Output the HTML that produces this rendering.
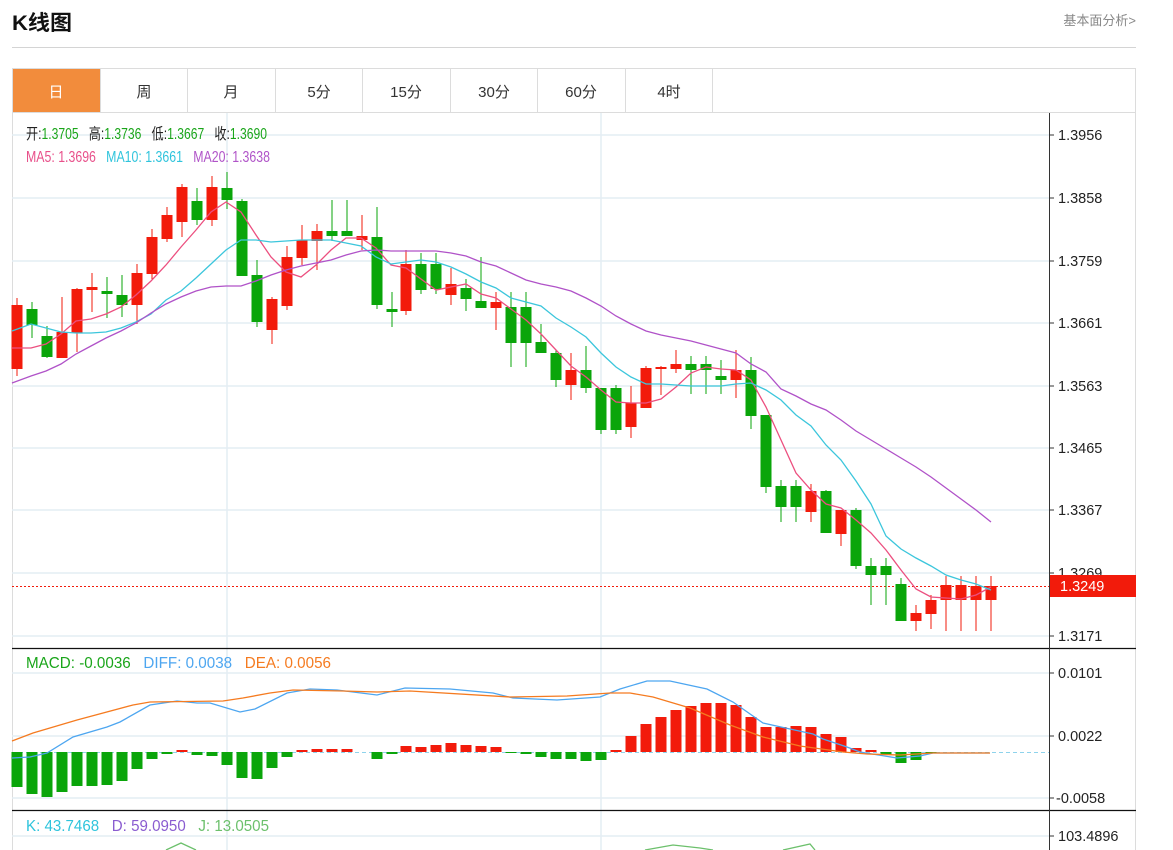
<!DOCTYPE html>
<html><head><meta charset="utf-8"><style>
body{margin:0;width:1173px;height:850px;overflow:hidden;background:#fff;font-family:"Liberation Sans","Noto Sans CJK SC",sans-serif;}
</style></head><body>
<svg width="1173" height="850" xmlns="http://www.w3.org/2000/svg" style="position:absolute;left:0;top:0" font-family="Liberation Sans, Noto Sans CJK SC, sans-serif">
<text x="12" y="30" font-size="21" font-weight="bold" fill="#111" textLength="60" lengthAdjust="spacingAndGlyphs">K线图</text>
<text x="1136" y="25" font-size="13" fill="#888" text-anchor="end">基本面分析&gt;</text>
<rect x="12" y="47" width="1124" height="1" fill="#d4d4d4"/>
<rect x="12.5" y="68.5" width="1123" height="44" fill="#fff" stroke="#dcdcdc"/>
<rect x="13" y="69" width="87" height="43" fill="#f28c3c"/>
<g stroke="#dcdcdc"><path d="M100.5 69v43M187.5 69v43M275.5 69v43M362.5 69v43M450.5 69v43M537.5 69v43M625.5 69v43M712.5 69v43"/></g>
<g font-size="15" fill="#333" text-anchor="middle">
<text x="56" y="97" fill="#fff">日</text><text x="144" y="97">周</text><text x="231" y="97">月</text><text x="319" y="97">5分</text><text x="406" y="97">15分</text><text x="494" y="97">30分</text><text x="581" y="97">60分</text><text x="669" y="97">4时</text>
</g>
<path d="M12.5 112v738M1135.5 112v738" stroke="#dcdcdc"/>
<g stroke="#e4edf4" stroke-width="1.5">
<path d="M12 135H1049M12 198H1049M12 261H1049M12 323H1049M12 386H1049M12 448H1049M12 510H1049M12 573H1049M12 636H1049M12 673H1049M12 736H1049M12 798H1049M12 836H1049M227 113V850M601 113V850"/>
</g>
<path d="M12 648.5H1136M12 810.5H1136" stroke="#111" stroke-width="1.3"/>
<path d="M1049.5 113V850" stroke="#333"/>
<g stroke="#333"><path d="M1049 135h5M1049 198h5M1049 261h5M1049 323h5M1049 386h5M1049 448h5M1049 510h5M1049 573h5M1049 636h5M1049 673h5M1049 736h5M1049 798h5M1049 836h5"/></g>
<g font-size="14.5" fill="#222">
<text x="1058" y="140">1.3956</text><text x="1058" y="203">1.3858</text><text x="1058" y="266">1.3759</text><text x="1058" y="328">1.3661</text><text x="1058" y="391">1.3563</text><text x="1058" y="453">1.3465</text><text x="1058" y="515">1.3367</text><text x="1058" y="578">1.3269</text><text x="1058" y="641">1.3171</text>
<text x="1058" y="678">0.0101</text><text x="1058" y="741">0.0022</text><text x="1056" y="803">-0.0058</text><text x="1058" y="841">103.4896</text>
</g>
<rect x="1050" y="575" width="86" height="22" fill="#f21b0b"/>
<text x="1060" y="591" font-size="14.5" fill="#fff">1.3249</text>
<path d="M12 586.5H1049" stroke="#f21b0b" stroke-dasharray="2,2"/>
<g font-size="15.5">
<text x="26" y="139" fill="#222" xml:space="preserve" textLength="241" lengthAdjust="spacingAndGlyphs">开:<tspan fill="#1aa51a">1.3705</tspan>   高:<tspan fill="#1aa51a">1.3736</tspan>   低:<tspan fill="#1aa51a">1.3667</tspan>   收:<tspan fill="#1aa51a">1.3690</tspan></text>
<text x="26" y="162" fill="#e8508a" xml:space="preserve" textLength="244" lengthAdjust="spacingAndGlyphs">MA5: 1.3696   <tspan fill="#2fc4dc">MA10: 1.3661</tspan>   <tspan fill="#b054c8">MA20: 1.3638</tspan></text>
<text x="26" y="668" fill="#1aa51a" xml:space="preserve" textLength="305" lengthAdjust="spacingAndGlyphs">MACD: -0.0036   <tspan fill="#4da6f0">DIFF: 0.0038</tspan>   <tspan fill="#f57b20">DEA: 0.0056</tspan></text>
<text x="26" y="831" fill="#2fc4dc" xml:space="preserve" textLength="243" lengthAdjust="spacingAndGlyphs">K: 43.7468   <tspan fill="#8a5cd0">D: 59.0950</tspan>   <tspan fill="#6cc06c">J: 13.0505</tspan></text>
</g>
<g fill="#f21b0b">
<rect x="16.5" y="298" width="1" height="78"/><rect x="11.5" y="305" width="11" height="64"/>
<rect x="61.5" y="297" width="1" height="61"/><rect x="56.5" y="332" width="11" height="26"/>
<rect x="76.5" y="288" width="1" height="64"/><rect x="71.5" y="289" width="11" height="44"/>
<rect x="91.5" y="273" width="1" height="39"/><rect x="86.5" y="287" width="11" height="3"/>
<rect x="136.5" y="264" width="1" height="60"/><rect x="131.5" y="273" width="11" height="32"/>
<rect x="151.5" y="229" width="1" height="50"/><rect x="146.5" y="237" width="11" height="37"/>
<rect x="166.5" y="207" width="1" height="35"/><rect x="161.5" y="215" width="11" height="24"/>
<rect x="181.5" y="184" width="1" height="53"/><rect x="176.5" y="187" width="11" height="35"/>
<rect x="211.5" y="176" width="1" height="50"/><rect x="206.5" y="187" width="11" height="33"/>
<rect x="271.5" y="297" width="1" height="47"/><rect x="266.5" y="299" width="11" height="31"/>
<rect x="286.5" y="246" width="1" height="64"/><rect x="281.5" y="257" width="11" height="49"/>
<rect x="301.5" y="225" width="1" height="40"/><rect x="296.5" y="240" width="11" height="18"/>
<rect x="316.5" y="224" width="1" height="46"/><rect x="311.5" y="231" width="11" height="10"/>
<rect x="361.5" y="215" width="1" height="35"/><rect x="356.5" y="236" width="11" height="4"/>
<rect x="405.5" y="250" width="1" height="65"/><rect x="400.5" y="264" width="11" height="47"/>
<rect x="450.5" y="268" width="1" height="37"/><rect x="445.5" y="284" width="11" height="11"/>
<rect x="495.5" y="292" width="1" height="38"/><rect x="490.5" y="302" width="11" height="6"/>
<rect x="570.5" y="353" width="1" height="47"/><rect x="565.5" y="370" width="11" height="15"/>
<rect x="630.5" y="386" width="1" height="52"/><rect x="625.5" y="403" width="11" height="24"/>
<rect x="645.5" y="366" width="1" height="42"/><rect x="640.5" y="368" width="11" height="40"/>
<rect x="660.5" y="366" width="1" height="29"/><rect x="655.5" y="367" width="11" height="2"/>
<rect x="675.5" y="350" width="1" height="23"/><rect x="670.5" y="364" width="11" height="5"/>
<rect x="735.5" y="350" width="1" height="48"/><rect x="730.5" y="370" width="11" height="10"/>
<rect x="810.5" y="484" width="1" height="38"/><rect x="805.5" y="491" width="11" height="21"/>
<rect x="840.5" y="510" width="1" height="36"/><rect x="835.5" y="510" width="11" height="24"/>
<rect x="915.5" y="605" width="1" height="26"/><rect x="910.5" y="613" width="11" height="8"/>
<rect x="930.5" y="595" width="1" height="34"/><rect x="925.5" y="600" width="11" height="14"/>
<rect x="945.5" y="576" width="1" height="55"/><rect x="940.5" y="585" width="11" height="15"/>
<rect x="960.5" y="576" width="1" height="55"/><rect x="955.5" y="585" width="11" height="15"/>
<rect x="975.5" y="576" width="1" height="55"/><rect x="970.5" y="586" width="11" height="14"/>
<rect x="990.5" y="576" width="1" height="55"/><rect x="985.5" y="586" width="11" height="14"/>
</g>
<g fill="#0aa50a">
<rect x="31.5" y="302" width="1" height="36"/><rect x="26.5" y="309" width="11" height="16"/>
<rect x="46.5" y="326" width="1" height="32"/><rect x="41.5" y="336" width="11" height="21"/>
<rect x="106.5" y="277" width="1" height="41"/><rect x="101.5" y="291" width="11" height="3"/>
<rect x="121.5" y="275" width="1" height="42"/><rect x="116.5" y="295" width="11" height="10"/>
<rect x="196.5" y="188" width="1" height="37"/><rect x="191.5" y="201" width="11" height="19"/>
<rect x="226.5" y="172" width="1" height="37"/><rect x="221.5" y="188" width="11" height="12"/>
<rect x="241.5" y="199" width="1" height="77"/><rect x="236.5" y="201" width="11" height="75"/>
<rect x="256.5" y="260" width="1" height="67"/><rect x="251.5" y="275" width="11" height="47"/>
<rect x="331.5" y="200" width="1" height="41"/><rect x="326.5" y="231" width="11" height="5"/>
<rect x="346.5" y="200" width="1" height="36"/><rect x="341.5" y="231" width="11" height="5"/>
<rect x="376.5" y="207" width="1" height="102"/><rect x="371.5" y="237" width="11" height="68"/>
<rect x="391.5" y="292" width="1" height="35"/><rect x="386.5" y="309" width="11" height="3"/>
<rect x="420.5" y="253" width="1" height="41"/><rect x="415.5" y="264" width="11" height="26"/>
<rect x="435.5" y="253" width="1" height="41"/><rect x="430.5" y="264" width="11" height="25"/>
<rect x="465.5" y="279" width="1" height="32"/><rect x="460.5" y="288" width="11" height="11"/>
<rect x="480.5" y="257" width="1" height="51"/><rect x="475.5" y="301" width="11" height="7"/>
<rect x="510.5" y="292" width="1" height="75"/><rect x="505.5" y="307" width="11" height="36"/>
<rect x="525.5" y="292" width="1" height="75"/><rect x="520.5" y="307" width="11" height="36"/>
<rect x="540.5" y="324" width="1" height="29"/><rect x="535.5" y="342" width="11" height="11"/>
<rect x="555.5" y="350" width="1" height="37"/><rect x="550.5" y="353" width="11" height="27"/>
<rect x="585.5" y="346" width="1" height="47"/><rect x="580.5" y="370" width="11" height="18"/>
<rect x="600.5" y="388" width="1" height="46"/><rect x="595.5" y="388" width="11" height="42"/>
<rect x="615.5" y="385" width="1" height="49"/><rect x="610.5" y="388" width="11" height="42"/>
<rect x="690.5" y="356" width="1" height="38"/><rect x="685.5" y="364" width="11" height="6"/>
<rect x="705.5" y="356" width="1" height="38"/><rect x="700.5" y="364" width="11" height="6"/>
<rect x="720.5" y="360" width="1" height="34"/><rect x="715.5" y="376" width="11" height="4"/>
<rect x="750.5" y="357" width="1" height="72"/><rect x="745.5" y="370" width="11" height="46"/>
<rect x="765.5" y="415" width="1" height="78"/><rect x="760.5" y="415" width="11" height="72"/>
<rect x="780.5" y="480" width="1" height="42"/><rect x="775.5" y="486" width="11" height="21"/>
<rect x="795.5" y="480" width="1" height="42"/><rect x="790.5" y="486" width="11" height="21"/>
<rect x="825.5" y="490" width="1" height="43"/><rect x="820.5" y="491" width="11" height="42"/>
<rect x="855.5" y="508" width="1" height="61"/><rect x="850.5" y="510" width="11" height="56"/>
<rect x="870.5" y="558" width="1" height="47"/><rect x="865.5" y="566" width="11" height="9"/>
<rect x="885.5" y="558" width="1" height="47"/><rect x="880.5" y="566" width="11" height="9"/>
<rect x="900.5" y="578" width="1" height="43"/><rect x="895.5" y="584" width="11" height="37"/>
</g>
<g fill="none" stroke-width="1.3">
<polyline stroke="#ec4f7f" points="12,348 31,348 46,344 61,334 76,321 91,319 106,314 121,307 136,295 151,281 166,265 181,247 196,230 211,212 226,202 241,212 256,235 271,257 286,272 301,277 316,265 331,250 346,238 361,238 376,248 391,265 406,268 436,290 466,284 481,294 496,298 511,309 526,320 541,334 556,350 571,366 586,377 601,390 616,402 631,403 646,403 661,399 676,387 691,373 706,367 721,369 736,370 751,380 766,407 781,440 796,473 811,490 826,504 841,508 856,520 871,533 886,550 901,570 916,589 931,597 946,598 961,599 976,595 991,587"/>
<polyline stroke="#3cc6dc" points="12,331 31,324 46,328 61,332 76,333 91,333 106,332 121,328 136,322 151,314 166,300 181,291 196,278 211,264 226,250 241,240 256,240 271,242 286,241 301,240 316,240 331,240 346,243 361,246 376,257 391,264 406,262 421,260 436,262 451,267 466,274 481,282 496,288 511,298 526,302 541,306 556,318 571,327 586,337 601,353 616,367 631,377 646,384 661,384 676,385 691,386 706,386 721,386 736,384 751,383 766,390 781,400 796,415 811,426 826,445 841,460 856,481 871,504 886,536 901,549 916,558 931,566 946,575 961,580 976,584 991,590"/>
<polyline stroke="#b052c8" points="12,383 31,376 46,371 61,364 76,354 91,346 106,338 121,331 136,323 151,313 166,304 181,297 196,291 211,287 226,286 241,286 256,281 271,275 286,270 301,266 316,263 331,260 346,255 361,251 376,250 391,251 406,251 436,251 451,253 466,256 481,262 496,266 511,273 526,280 541,284 556,287 571,291 586,298 601,306 616,316 631,324 646,331 661,335 676,338 691,341 706,345 721,349 736,353 751,364 766,372 781,389 796,396 811,404 826,410 841,420 856,431 871,440 886,449 901,458 916,467 931,477 946,488 961,499 976,510 991,522"/>
</g>
<path d="M12 752.5H1049" stroke="#8ed3ec" stroke-dasharray="4,3"/>
<g fill="#0aa50a">
<rect x="11.5" y="752" width="11" height="35"/><rect x="26.5" y="752" width="11" height="42"/><rect x="41.5" y="752" width="11" height="45"/><rect x="56.5" y="752" width="11" height="40"/><rect x="71.5" y="752" width="11" height="34"/><rect x="86.5" y="752" width="11" height="34"/><rect x="101.5" y="752" width="11" height="33"/><rect x="116.5" y="752" width="11" height="29"/><rect x="131.5" y="752" width="11" height="17"/><rect x="146.5" y="752" width="11" height="7"/><rect x="161.5" y="752" width="11" height="2"/>
<rect x="191.5" y="752" width="11" height="3"/><rect x="206.5" y="752" width="11" height="4"/><rect x="221.5" y="752" width="11" height="13"/><rect x="236.5" y="752" width="11" height="26"/><rect x="251.5" y="752" width="11" height="27"/><rect x="266.5" y="752" width="11" height="16"/><rect x="281.5" y="752" width="11" height="5"/>
<rect x="371.5" y="752" width="11" height="7"/><rect x="386.5" y="752" width="11" height="2"/>
<rect x="505.5" y="752" width="11" height="1"/><rect x="520.5" y="752" width="11" height="2"/><rect x="535.5" y="752" width="11" height="5"/><rect x="550.5" y="752" width="11" height="7"/><rect x="565.5" y="752" width="11" height="7"/><rect x="580.5" y="752" width="11" height="9"/><rect x="595.5" y="752" width="11" height="8"/>
<rect x="880.5" y="752" width="11" height="3"/><rect x="895.5" y="752" width="11" height="11"/><rect x="910.5" y="752" width="11" height="8"/><rect x="925.5" y="752" width="11" height="1"/>
</g>
<g fill="#f21b0b">
<rect x="176.5" y="750" width="11" height="2"/><rect x="296.5" y="750" width="11" height="2"/><rect x="311.5" y="749" width="11" height="3"/><rect x="326.5" y="749" width="11" height="3"/><rect x="341.5" y="749" width="11" height="3"/>
<rect x="400.5" y="746" width="11" height="6"/><rect x="415.5" y="747" width="11" height="5"/><rect x="430.5" y="745" width="11" height="7"/><rect x="445.5" y="743" width="11" height="9"/><rect x="460.5" y="745" width="11" height="7"/><rect x="475.5" y="746" width="11" height="6"/><rect x="490.5" y="747" width="11" height="5"/>
<rect x="610.5" y="750" width="11" height="2"/><rect x="625.5" y="736" width="11" height="16"/><rect x="640.5" y="724" width="11" height="28"/><rect x="655.5" y="717" width="11" height="35"/><rect x="670.5" y="710" width="11" height="42"/><rect x="685.5" y="706" width="11" height="46"/><rect x="700.5" y="703" width="11" height="49"/><rect x="715.5" y="703" width="11" height="49"/><rect x="730.5" y="705" width="11" height="47"/><rect x="745.5" y="717" width="11" height="35"/><rect x="760.5" y="727" width="11" height="25"/><rect x="775.5" y="727" width="11" height="25"/><rect x="790.5" y="726" width="11" height="26"/><rect x="805.5" y="727" width="11" height="25"/><rect x="820.5" y="734" width="11" height="18"/><rect x="835.5" y="737" width="11" height="15"/><rect x="850.5" y="748" width="11" height="4"/><rect x="865.5" y="750" width="11" height="2"/>
</g>
<g fill="none" stroke-width="1.3">
<polyline stroke="#4da6f0" points="12,758 30,757 47,753 73,737 107,727 120,722 150,705 177,701 197,703 210,703 240,712 255,709 287,693 310,689 337,690 377,695 405,688 450,689 493,693 513,698 557,700 600,697 620,689 647,681 670,681 707,689 733,702 763,723 790,729 813,734 823,739 847,747 860,752 897,758 920,756 933,753 990,753"/>
<polyline stroke="#f57b20" points="12,741 33,733 77,720 133,705 150,702 223,701 243,698 270,693 293,690 343,691 377,692 410,691 510,697 567,696 610,693 630,693 653,697 690,708 730,725 763,737 800,746 843,752 867,754 900,755 933,753 990,753"/>
<polyline stroke="#6cc06c" points="166,850 181,843 196,850"/>
<polyline stroke="#6cc06c" points="645,850 673,845 700,848 713,850"/>
<polyline stroke="#6cc06c" points="783,850 810,844 815,850"/>
</g>
</svg>
</body></html>
